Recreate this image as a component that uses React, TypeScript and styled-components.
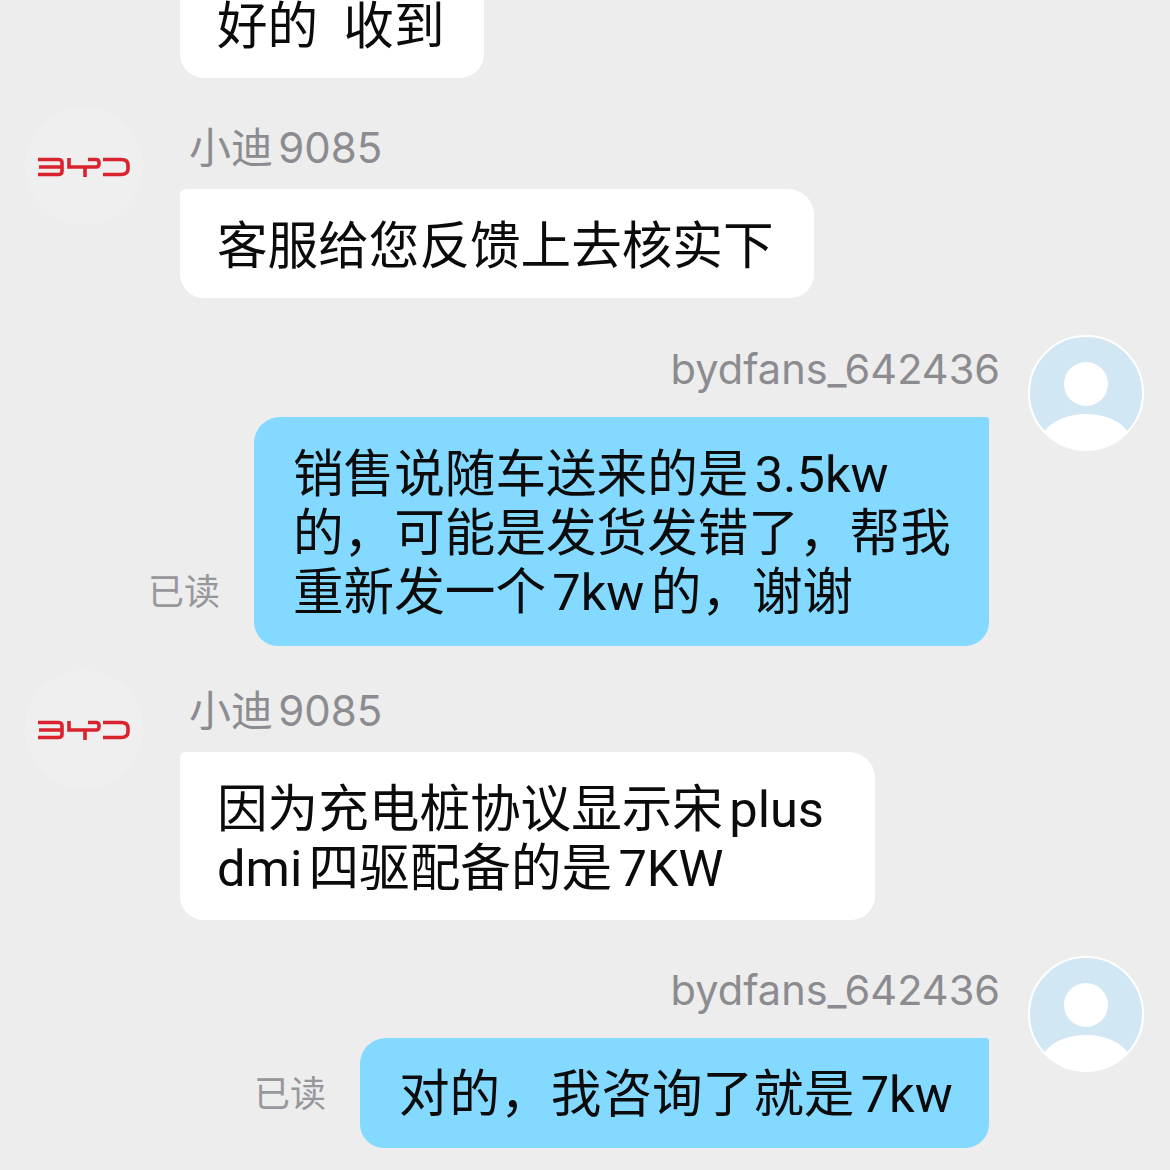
import React from "react";
import styled, { createGlobalStyle } from "styled-components";

const GlobalStyle = createGlobalStyle`
  html, body {
    margin: 0;
    padding: 0;
    background: #ededed;
  }
`;

const ByLogo = () => (
  <svg width="92" height="20" viewBox="0 0 92 20" fill="none" stroke="#d9232e" strokeWidth="3.6">
    <path d="M0 2.5H20Q24 2.5 24 5.5V14.5Q24 17.5 20 17.5H0M1 10H23" />
    <path d="M31 1V10H58Q61 10 61 7V5Q61 2.5 58 2.5H50M47 10V20" />
    <path d="M65 2.5H83Q90 2.5 90 8V12Q90 17.5 83 17.5H65" />
  </svg>
);

const UserFace = () => (
  <svg width="116" height="118" viewBox="0 0 116 118">
    <defs>
      <clipPath id="faceClip">
        <circle cx="58" cy="58" r="57" />
      </clipPath>
    </defs>
    <circle cx="58" cy="58" r="57" fill="#d2e7f4" stroke="#fff" strokeWidth="2" />
    <circle cx="58" cy="49" r="22" fill="#fff" />
    <ellipse cx="58" cy="109" rx="46" ry="30" fill="#fff" clipPath="url(#faceClip)" />
  </svg>
);

const Page = styled.div`
  width: 1170px;
  height: 1170px;
  overflow: hidden;
  background: #ededed;
  font-family: Roboto, "Noto Sans CJK SC", sans-serif;
  text-autospace: normal;
`;

const List = styled.div`
  display: flex;
  flex-direction: column;
  margin-top: -32px;
`;

const LeftRow = styled.div<{ $top: number }>`
  display: flex;
  gap: 37px;
  margin-top: ${(p) => p.$top}px;
  padding-left: 25px;
`;

const RightRow = styled.div<{ $top: number }>`
  display: flex;
  justify-content: flex-end;
  gap: 28px;
  margin-top: ${(p) => p.$top}px;
  padding-right: 26px;
`;

const BrandAvatar = styled.div`
  flex: none;
  width: 118px;
  height: 118px;
  border-radius: 50%;
  background: #efefef;
  display: flex;
  align-items: center;
  justify-content: center;
  padding-top: 2px;
  box-sizing: border-box;
`;

const Gutter = styled.div`
  flex: none;
  width: 118px;
`;

const Column = styled.div<{ $right?: boolean }>`
  display: flex;
  flex-direction: column;
  align-items: ${(p) => (p.$right ? "flex-end" : "flex-start")};
`;

const Name = styled.div<{ $right?: boolean }>`
  font-family: Inter, "Noto Sans CJK SC", sans-serif;
  font-size: ${(p) => (p.$right ? "41.5px" : "42px")};
  line-height: 60px;
  color: #8c8c90;
  margin: ${(p) => (p.$right ? "4px 0 18px" : "11px 0 11px 9px")};
`;

const BubbleLine = styled.div`
  display: flex;
  align-items: flex-end;
  gap: 34px;
  margin-right: 11px;
`;

const Bubble = styled.div<{ $mine?: boolean; $width: number; $height: number }>`
  box-sizing: border-box;
  width: ${(p) => p.$width}px;
  height: ${(p) => p.$height}px;
  display: flex;
  flex-direction: column;
  justify-content: center;
  padding: ${(p) => (p.$mine ? "3px 0 0 39px" : "6px 0 0 37px")};
  background: ${(p) => (p.$mine ? "#83d9ff" : "#ffffff")};
  color: #0b0b0b;
  font-size: 50.6px;
  line-height: 59px;
  white-space: nowrap;
  border-radius: ${(p) => (p.$mine ? "26px 3px 24px 24px" : "6px 26px 24px 24px")};
`;

const ReadMark = styled.span`
  font-size: 36px;
  line-height: 44px;
  margin-bottom: 31px;
  color: #97979b;
  white-space: nowrap;
`;

export default function App() {
  return (
    <>
      <GlobalStyle />
      <Page>
        <List>
          <LeftRow $top={0}>
            <Gutter />
            <Bubble $width={304} $height={110}>
              <div>好的&nbsp;&nbsp;收到</div>
            </Bubble>
          </LeftRow>

          <LeftRow $top={29}>
            <BrandAvatar>
              <ByLogo />
            </BrandAvatar>
            <Column>
              <Name>小迪9085</Name>
              <Bubble $width={634} $height={109}>
                <div>客服给您反馈上去核实下</div>
              </Bubble>
            </Column>
          </LeftRow>

          <RightRow $top={37}>
            <Column $right>
              <Name $right>bydfans_642436</Name>
              <BubbleLine>
                <ReadMark>已读</ReadMark>
                <Bubble $mine $width={735} $height={229}>
                  <div>销售说随车送来的是3.5kw</div>
                  <div>的，可能是发货发错了，帮我</div>
                  <div>重新发一个7kw的，谢谢</div>
                </Bubble>
              </BubbleLine>
            </Column>
            <UserFace />
          </RightRow>

          <LeftRow $top={24}>
            <BrandAvatar>
              <ByLogo />
            </BrandAvatar>
            <Column>
              <Name>小迪9085</Name>
              <Bubble $width={695} $height={168}>
                <div>因为充电桩协议显示宋plus</div>
                <div>dmi四驱配备的是7KW</div>
              </Bubble>
            </Column>
          </LeftRow>

          <RightRow $top={36}>
            <Column $right>
              <Name $right>bydfans_642436</Name>
              <BubbleLine>
                <ReadMark>已读</ReadMark>
                <Bubble $mine $width={629} $height={110}>
                  <div>对的，我咨询了就是7kw</div>
                </Bubble>
              </BubbleLine>
            </Column>
            <UserFace />
          </RightRow>
        </List>
      </Page>
    </>
  );
}
